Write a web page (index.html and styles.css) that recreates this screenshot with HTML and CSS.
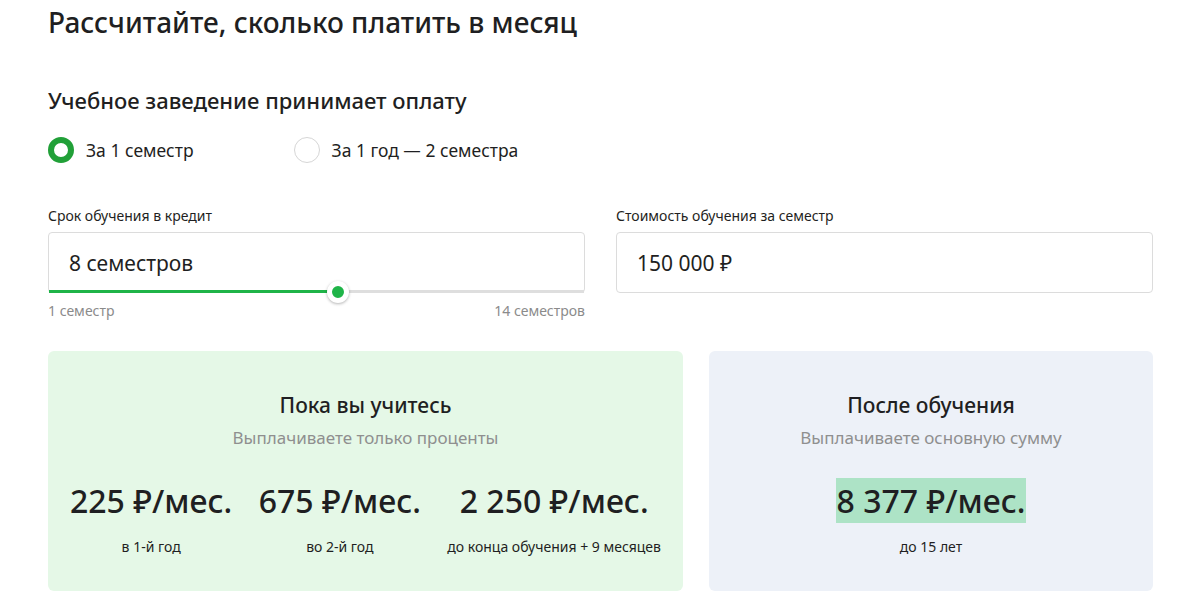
FILE: index.html
```html
<!DOCTYPE html>
<html lang="ru">
<head>
<meta charset="UTF-8">
<title>Калькулятор образовательного кредита</title>
<link rel="stylesheet" href="styles.css">
</head>
<body>
<div class="calc">
  <h1 class="calc-title">Рассчитайте, сколько платить в месяц</h1>

  <h2 class="calc-subtitle">Учебное заведение принимает оплату</h2>
  <div class="radios">
    <label class="radio checked"><span class="radio-dot"></span>За 1 семестр</label>
    <label class="radio"><span class="radio-dot"></span>За 1 год — 2 семестра</label>
  </div>

  <div class="fields">
    <div class="field">
      <div class="field-label">Срок обучения в кредит</div>
      <div class="field-box">
        <span class="field-value">8 семестров</span>
        <div class="slider">
          <div class="slider-fill" style="width: 289px"></div>
          <div class="slider-thumb" style="left: 289px"></div>
        </div>
      </div>
      <div class="field-hints">
        <span>1 семестр</span>
        <span>14 семестров</span>
      </div>
    </div>
    <div class="field">
      <div class="field-label">Стоимость обучения за семестр</div>
      <div class="field-box">
        <span class="field-value">150 000 ₽</span>
      </div>
    </div>
  </div>

  <div class="cards">
    <div class="card card-green">
      <div class="card-title">Пока вы учитесь</div>
      <div class="card-note">Выплачиваете только проценты</div>
      <div class="card-cols">
        <div class="col">
          <div class="amount">225 ₽/мес.</div>
          <div class="amount-note">в 1-й год</div>
        </div>
        <div class="col">
          <div class="amount">675 ₽/мес.</div>
          <div class="amount-note">во 2-й год</div>
        </div>
        <div class="col">
          <div class="amount">2 250 ₽/мес.</div>
          <div class="amount-note">до конца обучения + 9 месяцев</div>
        </div>
      </div>
    </div>
    <div class="card card-blue">
      <div class="card-title">После обучения</div>
      <div class="card-note">Выплачиваете основную сумму</div>
      <div class="card-cols card-cols-single">
        <div class="col">
          <div class="amount amount-mark">8 377 ₽/мес.</div>
          <div class="amount-note">до 15 лет</div>
        </div>
      </div>
    </div>
  </div>
</div>
</body>
</html>
```

FILE: styles.css
```css
body {
  margin: 0;
  font-family: "Noto Sans", Arial, sans-serif;
  color: #1f1f22;
  background-color: #fff;
}

.calc {
  padding: 0 47px 0 48px;
}

.calc-title {
  margin: 0;
  padding-top: 3px;
  font-size: 28px;
  line-height: 38px;
  font-weight: 500;
}

.calc-subtitle {
  margin: 44px 0 0;
  font-size: 22px;
  line-height: 30px;
  font-weight: 500;
}

.radios {
  display: flex;
  gap: 100px;
  margin-top: 22px;
}

.radio {
  display: flex;
  align-items: center;
  gap: 12px;
  white-space: nowrap;
  font-size: 17.5px;
  line-height: 26px;
}

.radio-dot {
  flex: none;
  width: 26px;
  height: 26px;
  box-sizing: border-box;
  border: 1px solid #d6d6d6;
  border-radius: 50%;
}

.radio.checked .radio-dot {
  border: 6px solid #21a038;
}

.fields {
  display: grid;
  grid-template-columns: 537px 537px;
  gap: 31px;
  margin-top: 43px;
}

.field-label {
  font-size: 14px;
  line-height: 20px;
  margin-bottom: 6px;
}

.field-box {
  position: relative;
  height: 61px;
  box-sizing: border-box;
  border: 1px solid #dcdcdc;
  border-radius: 4px;
  padding: 0 20px;
  display: flex;
  align-items: center;
}

.field-value {
  font-size: 21px;
}

.slider {
  position: absolute;
  left: 0;
  right: 0;
  bottom: -1px;
  height: 3px;
  background-color: #dedede;
}

.slider-fill {
  height: 3px;
  background-color: #1fb448;
}

.slider-thumb {
  position: absolute;
  top: -9px;
  width: 22px;
  height: 22px;
  margin-left: -11px;
  box-sizing: border-box;
  border: 5px solid #fff;
  border-radius: 50%;
  background-color: #1fb448;
  box-shadow: 0 1px 3px rgba(0, 0, 0, 0.3);
}

.field-hints {
  display: flex;
  justify-content: space-between;
  margin-top: 8px;
  font-size: 14px;
  line-height: 20px;
  color: #8b8b8b;
}

.cards {
  display: grid;
  grid-template-columns: 635px 444px;
  gap: 26px;
  margin-top: 30px;
}

.card {
  height: 240px;
  border-radius: 6px;
  padding: 40px 22px 0;
  box-sizing: border-box;
  text-align: center;
}

.card-green {
  background-color: #e5f8e7;
}

.card-blue {
  background-color: #edf1f8;
}

.card-title {
  font-size: 21px;
  line-height: 28px;
  font-weight: 500;
}

.card-note {
  margin-top: 8px;
  font-size: 17px;
  line-height: 22px;
  color: #8f8f8f;
}

.card-cols {
  display: flex;
  justify-content: space-between;
  margin-top: 29px;
}

.card-cols-single {
  justify-content: center;
}

.col {
  display: flex;
  flex-direction: column;
  align-items: center;
}

.amount {
  font-size: 32px;
  line-height: 45px;
  font-weight: 500;
}

.amount-mark {
  background-color: #ade3c6;
  padding: 0 1px;
}

.amount-note {
  margin-top: 14px;
  font-size: 14px;
  line-height: 20px;
}
```
